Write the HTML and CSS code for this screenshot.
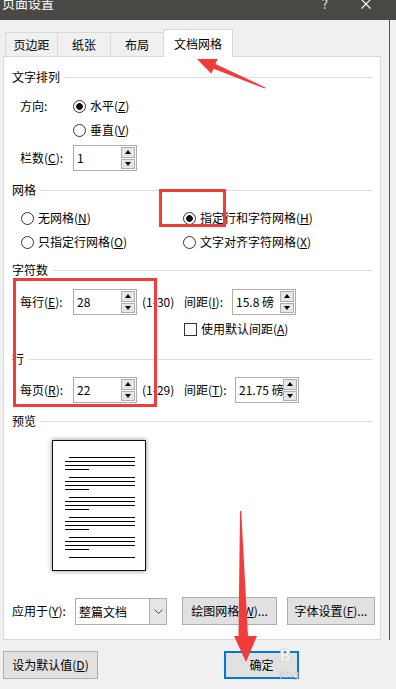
FILE: index.html
```html
<!DOCTYPE html>
<html lang="zh">
<head>
<meta charset="utf-8">
<link rel="stylesheet" href="styles.css">
</head>
<body>
<div class="titlebar">
  <span class="title">页面设置</span>
  <span class="help">?</span>
  <svg class="close" viewBox="0 0 10 10"><path d="M0.5 0.5L9.5 9.5M9.5 0.5L0.5 9.5" stroke="#fff" stroke-width="1.1" fill="none"/></svg>
</div>
<div class="main">
  <div class="dialog">
    <div class="tabs">
      <div class="tab w1">页边距</div>
      <div class="tab w2">纸张</div>
      <div class="tab w2">布局</div>
      <div class="tab active">文档网格</div>
    </div>
    <div class="panel">
      <div class="sec s1">文字排列</div>
      <div class="row r24 m9"><span class="lbl">方向:</span><span class="radio on"><i></i>水平(<u>Z</u>)</span></div>
      <div class="row r24 indent"><span class="radio"><i></i>垂直(<u>V</u>)</span></div>
      <div class="row m3"><span class="lbl">栏数(<u>C</u>):</span><span class="spin"><span class="val">1</span><span class="btns"><span class="up"></span><span class="dn"></span></span></span></div>

      <div class="sec m11">网格</div>
      <div class="grid2">
        <span class="radio"><i></i>无网格(<u>N</u>)</span>
        <span class="radio on"><i></i>指定行和字符网格(<u>H</u>)</span>
        <span class="radio"><i></i>只指定行网格(<u>O</u>)</span>
        <span class="radio"><i></i>文字对齐字符网格(<u>X</u>)</span>
      </div>

      <div class="sec m8">字符数</div>
      <div class="row m11"><span class="lbl">每行(<u>E</u>):</span><span class="spin"><span class="val">28</span><span class="btns"><span class="up"></span><span class="dn"></span></span></span><span class="range">(1-30)</span><span class="lbl2">间距(<u>I</u>):</span><span class="spin"><span class="val">15.8 磅</span><span class="btns"><span class="up"></span><span class="dn"></span></span></span></div>
      <div class="row r24 m2"><span class="check"><i></i>使用默认间距(<u>A</u>)</span></div>

      <div class="sec m10">行</div>
      <div class="row m10"><span class="lbl">每页(<u>R</u>):</span><span class="spin"><span class="val">22</span><span class="btns"><span class="up"></span><span class="dn"></span></span></span><span class="range">(1-29)</span><span class="lbl2 wide">间距(<u>T</u>):</span><span class="spin"><span class="val">21.75 磅</span><span class="btns"><span class="up"></span><span class="dn"></span></span></span></div>

      <div class="sec m10">预览</div>
      <div class="page">
        <div class="grp"><span class="ln ind"></span><span class="ln"></span><span class="ln"></span><span class="ln short"></span></div>
        <div class="grp"><span class="ln ind"></span><span class="ln"></span><span class="ln"></span><span class="ln short"></span></div>
        <div class="grp"><span class="ln ind"></span><span class="ln"></span><span class="ln"></span><span class="ln short"></span></div>
        <div class="grp"><span class="ln ind"></span><span class="ln"></span><span class="ln"></span><span class="ln short"></span></div>
        <div class="grp"><span class="ln ind"></span><span class="ln"></span><span class="ln"></span><span class="ln short"></span></div>
        <div class="grp"><span class="ln ind"></span></div>
      </div>

      <div class="apply">
        <span class="alabel">应用于(<u>Y</u>):</span>
        <span class="select"><span class="v">整篇文档</span><span class="dd"><svg viewBox="0 0 9 5" width="9" height="5"><path d="M0.5 0.5L4.5 4.5L8.5 0.5" stroke="#555" stroke-width="1" fill="none"/></svg></span></span>
        <span class="btn b1">绘图网格(<u>W</u>)...</span>
        <span class="btn b2">字体设置(<u>F</u>)...</span>
      </div>
    </div>
    <div class="footer">
      <span class="btn defbtn">设为默认值(<u>D</u>)</span>
      <span class="btn okbtn">确定</span>
    </div>
  </div>
  <div class="edge"></div>
</div>

<div class="wm"><span class="wm1">B</span><span class="wm2">jing</span></div>

<svg class="annot" width="396" height="689" viewBox="0 0 396 689">
  <rect x="160.5" y="190.5" width="64" height="35" fill="none" stroke="#f23c3c" stroke-width="3"/>
  <rect x="14.5" y="279.5" width="141" height="126" fill="none" stroke="#f23c3c" stroke-width="3"/>
  <polygon points="197,59 217.6,59 215.5,64.1 265.3,87.4 264.7,88.6 213.5,68.7 211.4,73.8" fill="#f23c3c"/>
  <polygon points="240,511 241.2,511 248,636 257,636 246,662 234,636 238.5,636" fill="#f23c3c"/>
</svg>
</body>
</html>
```

FILE: styles.css
```css
* { box-sizing: border-box; }
html, body { margin: 0; padding: 0; }
body {
  width: 396px;
  height: 689px;
  overflow: hidden;
  background: #f0f0f0;
  font-family: "Noto Sans CJK SC", "Microsoft YaHei", sans-serif;
  font-size: 12px;
  line-height: 16px;
  color: #000;
  position: relative;
}
u { text-decoration: underline; text-underline-offset: 1px; }

.titlebar {
  height: 20px;
  background: #4a4845;
  color: #fff;
  display: flex;
  align-items: flex-start;
  overflow: hidden;
}
.title { margin: -7px 0 0 2px; font-size: 13px; line-height: 20px; }
.help { margin: -6px 0 0 auto; font-size: 13px; line-height: 20px; color: #e8e8e8; }
.close { margin: -1px 25px 0 33px; width: 10px; height: 10px; flex: none; }

.main { display: flex; height: 669px; }
.dialog { width: 389px; flex: none; }
.edge { width: 1px; height: 620px; background: #555; flex: none; }

.tabs { display: flex; align-items: flex-end; height: 27px; margin: 9px 0 0 5px; }
.tab {
  height: 24px;
  border: 1px solid #d9d9d9;
  border-bottom: none;
  background: #f0f0f0;
  display: flex;
  align-items: center;
  justify-content: center;
}
.tab + .tab { margin-left: -1px; }
.w1 { width: 53px; }
.w2 { width: 54px; }
.tab.active {
  width: 70px;
  height: 28px;
  margin-bottom: -1px;
  background: #fff;
  position: relative;
  z-index: 1;
}

.panel {
  margin-left: 3px;
  width: 378px;
  height: 584px;
  border: 1px solid #d9d9d9;
  background: #fff;
}

.sec {
  display: flex;
  align-items: center;
  height: 16px;
  padding: 0 7px 0 8px;
}
.sec::after { content: ""; flex: 1; height: 1px; background: #dcdcdc; margin-left: 5px; }
.s1 { margin-top: 12px; }
.m2 { margin-top: 2px; }
.m3 { margin-top: 3px; }
.m8 { margin-top: 8px; }
.m9 { margin-top: 9px; }
.m10 { margin-top: 10px; }
.m11 { margin-top: 11px; }

.row { display: flex; align-items: center; padding-left: 16px; }
.r24 { height: 24px; }
.indent { padding-left: 69px; }
.lbl { width: 53px; flex: none; }
.range { width: 42px; margin-left: 5px; flex: none; }
.lbl2 { width: 48px; flex: none; }
.lbl2.wide { width: 51px; }

.radio, .check { display: flex; align-items: center; height: 24px; white-space: nowrap; }
.radio i, .check i {
  width: 13px;
  height: 13px;
  border: 1px solid #333;
  background: #fff;
  margin-right: 4px;
  flex: none;
}
.radio i { border-radius: 50%; }
.radio.on i { background: radial-gradient(circle, #111 0 3px, #fff 3.7px); }
.check { margin-left: 164px; }

.grid2 {
  display: grid;
  grid-template-columns: 162px auto;
  padding-left: 17px;
  margin-top: 8px;
}

.spin {
  width: 64px;
  height: 26px;
  border: 1px solid #adadad;
  background: #fff;
  display: flex;
  align-items: stretch;
  padding: 1px 1px 1px 3px;
  flex: none;
}
.spin .val { flex: 1; overflow: hidden; white-space: nowrap; line-height: 22px; }
.btns { width: 14px; display: flex; flex-direction: column; gap: 1px; flex: none; }
.btns span {
  flex: 1;
  background: #e6e6e6;
  border: 1px solid #adadad;
  display: flex;
  align-items: center;
  justify-content: center;
}
.btns .up::before {
  content: "";
  border-left: 3px solid transparent;
  border-right: 3px solid transparent;
  border-bottom: 4px solid #000;
}
.btns .dn::before {
  content: "";
  border-left: 3px solid transparent;
  border-right: 3px solid transparent;
  border-top: 4px solid #000;
}

.page {
  margin: 11px 0 0 48px;
  width: 94px;
  height: 131px;
  border: 1px solid #111;
  background: #fff;
  box-shadow: 0 0 5px rgba(0, 0, 0, 0.45);
  padding: 16px 0 0 12px;
}
.grp { display: flex; flex-direction: column; gap: 3px; margin-bottom: 7px; }
.ln { display: block; height: 1px; width: 70px; background: #000; }
.ln.ind { width: 66px; margin-left: 4px; }
.ln.short { width: 24px; }

.apply { display: flex; align-items: center; height: 28px; margin-top: 26px; padding-left: 8px; }
.alabel { width: 63px; flex: none; }
.select {
  width: 92px;
  height: 27px;
  border: 1px solid #adadad;
  background: #fff;
  display: flex;
  flex: none;
}
.select .v { flex: 1; padding-left: 3px; line-height: 25px; }
.select .dd {
  width: 17px;
  background: #e6e6e6;
  border-left: 1px solid #adadad;
  display: flex;
  align-items: center;
  justify-content: center;
}
.btn {
  height: 28px;
  border: 1px solid #adadad;
  background: #e1e1e1;
  display: flex;
  align-items: center;
  justify-content: center;
  flex: none;
  white-space: nowrap;
}
.b1 { width: 95px; margin-left: 15px; }
.b2 { width: 88px; margin-left: 10px; }

.footer { display: flex; margin-top: 11px; padding-left: 3px; }
.defbtn { width: 95px; }
.okbtn { width: 75px; margin-left: 126px; border: 2px solid #0078d7; }

.wm {
  position: absolute;
  left: 279px;
  top: 648px;
  width: 24px;
  display: flex;
  flex-direction: column;
  font-family: "DejaVu Sans", sans-serif;
  color: #f6f6f6;
  -webkit-text-stroke: 0.5px #c9c9c9;
  pointer-events: none;
}
.wm1 { font-size: 16px; line-height: 16px; font-weight: bold; }
.wm2 { font-size: 11px; line-height: 14px; margin-top: 4px; color: #d0d0d0; -webkit-text-stroke: 0; }

.annot { position: absolute; left: 0; top: 0; pointer-events: none; }
```
